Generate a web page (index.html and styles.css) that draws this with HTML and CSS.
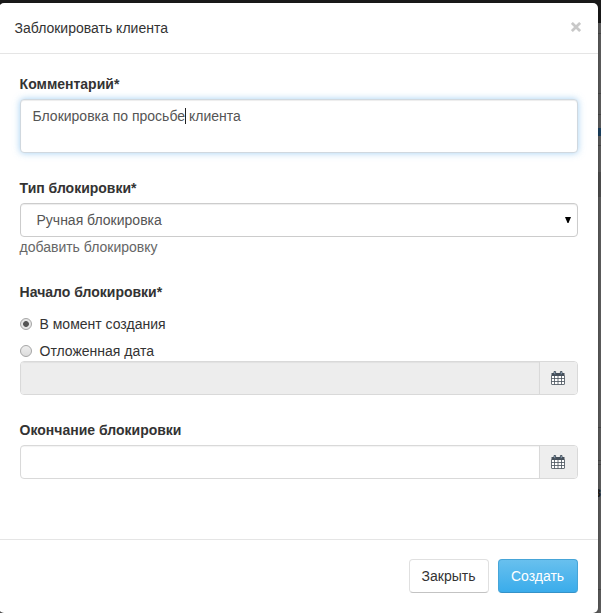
FILE: index.html
```html
<!DOCTYPE html>
<html lang="ru">
<head>
<meta charset="utf-8">
<title>Заблокировать клиента</title>
<link rel="stylesheet" href="styles.css">
</head>
<body>
<div class="backdrop" aria-hidden="true">
  <i class="topbar"></i><i class="rule r1"></i><i class="rule r2"></i><i class="rule r3"></i><i class="chip"></i><i class="rule r4"></i><i class="block"></i><i class="rule r5"></i><i class="rule r6"></i><i class="rule r7"></i><i class="mark">в</i><i class="rule r8"></i>
</div>
<svg class="defs" width="0" height="0" aria-hidden="true">
  <symbol id="calendar" viewBox="0 0 14 14">
    <path d="M1 2h12v11H1z" fill="#fff"/>
    <path d="M.5 2h13v3H.5z" fill="currentColor"/>
    <path d="M.5 4.500V13q0 .5.5.5h12q.5 0 .5-.5V4.500M3.500 5v8.500M7 5v8.500M10.500 5v8.500M.5 7.500h13M.5 10.500h13" fill="none" stroke="currentColor" stroke-width=".8"/>
    <path d="M3 .5h1.600v2.900H3zM9.400 .5H11v2.900H9.400z" fill="#a9c6df" stroke="currentColor" stroke-width=".9"/>
  </symbol>
</svg>
<form class="modal">
  <header class="header">
    <h1 class="title">Заблокировать клиента</h1>
    <button class="close" type="button" aria-label="Закрыть окно"><svg width="10" height="10" viewBox="0 0 10 10"><path d="M.9.9l8.200 8.200M9.100.9L.9 9.100" stroke="currentColor" stroke-width="2.700"/></svg></button>
  </header>
  <main class="body">
    <section class="group">
      <div class="label">Комментарий*</div>
      <div class="control comment">Блокировка по просьбе<span class="caret"></span> клиента</div>
    </section>
    <section class="group">
      <div class="label">Тип блокировки*</div>
      <div class="control select"><span>Ручная блокировка</span><svg width="6" height="6" viewBox="0 0 6 6"><path d="M0 0h6L3.500 6h-1z"/></svg></div>
      <a class="add">добавить блокировку</a>
    </section>
    <section class="group">
      <div class="label start">Начало блокировки*</div>
      <label class="option"><span class="radio checked"></span>В момент создания</label>
      <label class="option last"><span class="radio"></span>Отложенная дата</label>
      <div class="date disabled"><span class="value"></span><span class="addon"><svg width="14" height="14"><use href="#calendar"/></svg></span></div>
    </section>
    <section class="group">
      <div class="label">Окончание блокировки</div>
      <div class="date"><span class="value"></span><span class="addon"><svg width="14" height="14"><use href="#calendar"/></svg></span></div>
    </section>
  </main>
  <footer class="footer">
    <button class="btn" type="button">Закрыть</button>
    <button class="btn primary" type="button">Создать</button>
  </footer>
</form>
</body>
</html>
```
FILE: styles.css
```css
* { box-sizing: border-box; }
body {
  margin: 0;
  height: 613px;
  overflow: hidden;
  background: #666;
  font: 14px/20px "Liberation Sans", Arial, sans-serif;
  color: #333;
  padding-top: 3px;
}
.defs { position: absolute; }

/* Dimmed page behind the dialog */
.backdrop { position: absolute; inset: 0; overflow: hidden; }
.backdrop i { position: absolute; right: 0; font-style: normal; }
.topbar { top: 0; width: 100%; height: 23px; background: #1b1b1b; }
.rule { width: 3px; height: 1px; background: #505050; }
.r1 { top: 33px; }
.r2 { top: 93px; }
.r3 { top: 114px; }
.r4 { top: 145px; }
.r5 { top: 427px; }
.r6 { top: 460px; }
.r7 { top: 464px; }
.r8 { top: 589px; }
.chip { top: 128px; width: 3px; height: 8px; background: #1d4668; }
.block { top: 172px; width: 3px; height: 25px; background: #555; }
.backdrop .mark { top: 482px; right: 0; font-weight: bold; color: #222; }

.modal {
  position: relative;
  width: 599px;
  height: 610px;
  margin-left: -1px;
  background: #fff;
  border-radius: 5px;
  box-shadow: 0 2px 6px rgba(0, 0, 0, .5);
}
.header {
  display: flex;
  justify-content: space-between;
  height: 51px;
  padding: 15px 17px 0 15.5px;
  border-bottom: 1px solid #e5e5e5;
}
.title { margin: 0; font: inherit; }
.close {
  height: 10px;
  margin-top: 4px;
  padding: 0;
  border: 0;
  background: none;
  color: #c8c8c8;
  line-height: 0;
}
.body { height: 485px; padding: 20px 20px 0 21px; }
.group { margin-bottom: 25px; }
.label { margin: 0 0 5px -.4px; font-weight: bold; }
.label.start { margin-bottom: 12px; }
.control {
  border: 1px solid #ccc;
  border-radius: 4px;
  background: #fff;
  color: #555;
}
.comment {
  height: 54px;
  padding: 6px 11.5px;
  border-color: #d0d8df;
  box-shadow: inset 0 1px 1px rgba(0, 0, 0, .075), 0 0 7px rgba(102, 175, 233, .6);
}
.caret {
  display: inline-block;
  width: 1px;
  height: 16px;
  margin-left: -.5px;
  margin-right: -.5px;
  vertical-align: -3px;
  background: #222;
}
.select {
  display: flex;
  align-items: center;
  justify-content: space-between;
  height: 34px;
  padding: 0 6px 0 15.5px;
  box-shadow: inset 0 1px 1px rgba(0, 0, 0, .075);
}
.select svg { fill: #000; }
.add { display: block; margin-left: -.5px; color: #666; }
.option { display: flex; align-items: center; height: 20px; margin-bottom: 7px; }
.option.last { margin-bottom: 0; }
.radio {
  width: 12px;
  height: 12px;
  margin-right: 7.5px;
  border: 1px solid #a5a5a5;
  border-radius: 50%;
  background: linear-gradient(#eee, #dcdcdc);
}
.checked { background: radial-gradient(circle, #555 2.500px, #e6e6e6 3.300px); }
.date {
  display: flex;
  height: 34px;
  border: 1px solid #d9d9d9;
  border-radius: 4px;
  overflow: hidden;
}
.value { flex: 1; box-shadow: inset 0 1px 1px rgba(0, 0, 0, .05); }
.disabled .value { background: #ededed; }
.addon {
  display: flex;
  align-items: center;
  justify-content: center;
  width: 38px;
  padding-right: 1px;
  border-left: 1px solid #d9d9d9;
  background: #eee;
  color: #46505b;
}
.footer {
  display: flex;
  justify-content: flex-end;
  gap: 9px;
  padding: 19px 20px 0;
  border-top: 1px solid #e5e5e5;
}
.btn {
  width: 80px;
  height: 34px;
  padding: 0 1px 0 0;
  border: 1px solid #e0e0e0;
  border-bottom-color: #c3c3c3;
  border-radius: 4px;
  background: #fff;
  font: inherit;
  color: #333;
}
.primary {
  border-color: #46a5d8;
  border-bottom-color: #3592c8;
  background: linear-gradient(#68c0ee, #3aaceb);
  color: #fff;
}
```
